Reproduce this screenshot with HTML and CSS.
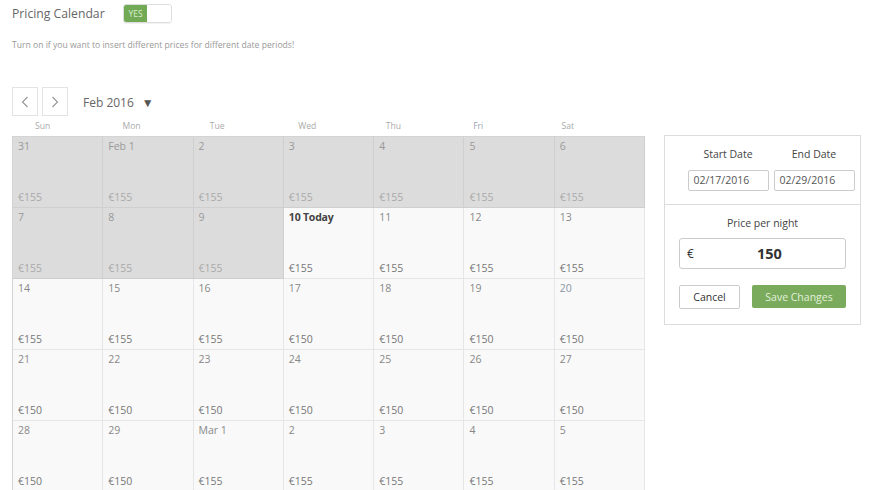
FILE: index.html
```html
<!DOCTYPE html>
<html>
<head>
<meta charset="utf-8">
<link rel="stylesheet" href="styles.css">
</head>
<body>
<div class="header">
  <span class="title">Pricing Calendar</span>
  <span class="toggle"><span class="toggle-on">YES</span><span class="toggle-off"></span></span>
</div>
<p class="hint">Turn on if you want to insert different prices for different date periods!</p>

<div class="main">
  <div class="calendar">
    <div class="nav">
      <button class="nav-btn"><svg width="8" height="12" viewBox="0 0 8 12"><path d="M6.5 1 L1.5 6 L6.5 11" fill="none" stroke="#999" stroke-width="1.2"/></svg></button>
      <button class="nav-btn"><svg width="8" height="12" viewBox="0 0 8 12"><path d="M1.5 1 L6.5 6 L1.5 11" fill="none" stroke="#999" stroke-width="1.2"/></svg></button>
      <span class="month">Feb 2016</span>
      <span class="caret">▼</span>
    </div>
    <div class="weekdays">
      <span>Sun</span><span>Mon</span><span>Tue</span><span>Wed</span><span>Thu</span><span>Fri</span><span>Sat</span>
    </div>
    <div class="grid">
      <div class="cell past"><span class="d">31</span><span class="p">€155</span></div>
      <div class="cell past"><span class="d">Feb 1</span><span class="p">€155</span></div>
      <div class="cell past"><span class="d">2</span><span class="p">€155</span></div>
      <div class="cell past"><span class="d">3</span><span class="p">€155</span></div>
      <div class="cell past"><span class="d">4</span><span class="p">€155</span></div>
      <div class="cell past"><span class="d">5</span><span class="p">€155</span></div>
      <div class="cell past"><span class="d">6</span><span class="p">€155</span></div>

      <div class="cell past"><span class="d">7</span><span class="p">€155</span></div>
      <div class="cell past"><span class="d">8</span><span class="p">€155</span></div>
      <div class="cell past"><span class="d">9</span><span class="p">€155</span></div>
      <div class="cell"><span class="d today">10 Today</span><span class="p">€155</span></div>
      <div class="cell"><span class="d">11</span><span class="p">€155</span></div>
      <div class="cell"><span class="d">12</span><span class="p">€155</span></div>
      <div class="cell"><span class="d">13</span><span class="p">€155</span></div>

      <div class="cell"><span class="d">14</span><span class="p">€155</span></div>
      <div class="cell"><span class="d">15</span><span class="p">€155</span></div>
      <div class="cell"><span class="d">16</span><span class="p">€155</span></div>
      <div class="cell"><span class="d">17</span><span class="p">€150</span></div>
      <div class="cell"><span class="d">18</span><span class="p">€150</span></div>
      <div class="cell"><span class="d">19</span><span class="p">€150</span></div>
      <div class="cell"><span class="d sat">20</span><span class="p">€150</span></div>

      <div class="cell"><span class="d">21</span><span class="p">€150</span></div>
      <div class="cell"><span class="d">22</span><span class="p">€150</span></div>
      <div class="cell"><span class="d">23</span><span class="p">€150</span></div>
      <div class="cell"><span class="d">24</span><span class="p">€150</span></div>
      <div class="cell"><span class="d">25</span><span class="p">€150</span></div>
      <div class="cell"><span class="d">26</span><span class="p">€150</span></div>
      <div class="cell"><span class="d">27</span><span class="p">€150</span></div>

      <div class="cell"><span class="d">28</span><span class="p">€150</span></div>
      <div class="cell"><span class="d">29</span><span class="p">€150</span></div>
      <div class="cell"><span class="d">Mar 1</span><span class="p">€155</span></div>
      <div class="cell"><span class="d">2</span><span class="p">€155</span></div>
      <div class="cell"><span class="d">3</span><span class="p">€155</span></div>
      <div class="cell"><span class="d">4</span><span class="p">€155</span></div>
      <div class="cell"><span class="d">5</span><span class="p">€155</span></div>
    </div>
  </div>

  <div class="panel">
    <div class="dates">
      <div class="field">
        <span class="label">Start Date</span>
        <span class="date-input">02/17/2016</span>
      </div>
      <div class="field">
        <span class="label">End Date</span>
        <span class="date-input">02/29/2016</span>
      </div>
    </div>
    <div class="price-section">
      <span class="label">Price per night</span>
      <div class="price-input"><span class="cur">€</span><span class="amount">150</span></div>
      <div class="actions">
        <button class="btn-cancel">Cancel</button>
        <button class="btn-save">Save Changes</button>
      </div>
    </div>
  </div>
</div>
</body>
</html>
```

FILE: styles.css
```css
* { box-sizing: border-box; }
body {
  margin: 0;
  padding: 0 0 0 12px;
  font-family: "Open Sans", "Liberation Sans", sans-serif;
  background: #fff;
  color: #777;
  width: 870px;
  height: 490px;
  overflow: hidden;
}
.header {
  display: flex;
  align-items: center;
  height: 28px;
  padding-bottom: 1px;
}
.title {
  font-size: 12.2px;
  color: #666;
  width: 111px;
}
.toggle {
  display: flex;
  width: 49px;
  height: 19px;
  border: 1px solid #ddd;
  border-radius: 3px;
  overflow: hidden;
  box-shadow: 0 1px 1px rgba(0,0,0,0.06);
}
.toggle-on {
  width: 23px;
  background: #72a954;
  color: #d9ecd0;
  font-size: 8.5px;
  display: flex;
  align-items: center;
  justify-content: center;
}
.toggle-off { flex: 1; background: #fff; }
.hint {
  margin: 11px 0 0;
  font-size: 8.6px;
  color: #999;
  line-height: 12px;
}
.main {
  display: flex;
  align-items: flex-start;
  margin-top: 36px;
}
.calendar { width: 633px; flex-shrink: 0; }
.nav {
  display: flex;
  align-items: center;
  height: 29px;
}
.nav-btn {
  width: 26px;
  height: 29px;
  border: 1px solid #e3e3e3;
  background: #fff;
  padding: 0;
  margin: 0 4px 0 0;
  display: flex;
  align-items: center;
  justify-content: center;
}
.month {
  margin-left: 11px;
  font-size: 12px;
  color: #666;
  padding-top: 2px;
}
.caret {
  margin-left: 8px;
  font-size: 12px;
  color: #555;
  padding-top: 1px;
}
.weekdays {
  display: grid;
  grid-template-columns: repeat(7, 1fr);
  height: 20px;
  align-items: center;
}
.weekdays span {
  font-size: 8.6px;
  color: #aaa;
}
.weekdays span:nth-child(1) { padding-left: 23px; }
.weekdays span:nth-child(2) { padding-left: 20px; }
.weekdays span:nth-child(3) { padding-left: 17px; }
.weekdays span:nth-child(4) { padding-left: 15px; }
.weekdays span:nth-child(5) { padding-left: 12px; }
.weekdays span:nth-child(6) { padding-left: 9px; color: #9aa4b0; }
.weekdays span:nth-child(7) { padding-left: 7px; }
.grid {
  display: grid;
  grid-template-columns: repeat(7, 1fr);
  grid-auto-rows: 71px;
  border-left: 1px solid #d4d4d4;
  border-top: 1px solid #d4d4d4;
}
.cell {
  display: flex;
  flex-direction: column;
  justify-content: space-between;
  padding: 2px 5px 2px 5px;
  background: #f9f9f9;
  border-right: 1px solid #e6e6e6;
  border-bottom: 1px solid #e6e6e6;
  font-size: 10.5px;
  line-height: 15px;
}
.cell .d { color: #888; }
.cell .d.sat { color: #8a96a6; }
.cell .p { color: #777; }
.cell.past {
  background: #dcdcdc;
  border-right-color: #cfcfcf;
  border-bottom-color: #cfcfcf;
}
.cell.past .d { color: #999; }
.cell.past .p { color: #aaa; }
.cell .today {
  color: #444;
  font-weight: bold;
  letter-spacing: -0.2px;
}
.panel {
  margin-left: 19px;
  margin-top: 48px;
  width: 197px;
  flex-shrink: 0;
  border: 1px solid #dcdcdc;
  background: #fff;
}
.dates {
  display: flex;
  justify-content: center;
  gap: 5px;
  padding: 10px 5px 13px 22px;
  border-bottom: 1px solid #dcdcdc;
}
.field {
  display: flex;
  flex-direction: column;
  align-items: center;
}
.label {
  font-size: 10.5px;
  color: #444;
  line-height: 16px;
}
.date-input {
  margin-top: 8px;
  width: 81px;
  height: 21px;
  border: 1px solid #ccc;
  border-radius: 2px;
  font-size: 10.5px;
  color: #555;
  padding-left: 5px;
  line-height: 19px;
}
.price-section {
  display: flex;
  flex-direction: column;
  align-items: center;
  padding: 10px 14px 15px 14px;
}
.price-input {
  margin-top: 7px;
  width: 167px;
  height: 31px;
  border: 1px solid #ccc;
  border-radius: 3px;
  display: flex;
  align-items: center;
  padding-left: 7px;
  color: #333;
}
.cur { font-size: 12px; }
.amount {
  font-size: 14.5px;
  font-weight: bold;
  margin-left: 63px;
}
.actions {
  margin-top: 16px;
  display: flex;
  justify-content: space-between;
  width: 167px;
}
.btn-cancel {
  width: 61px;
  height: 24px;
  border: 1px solid #ccc;
  border-radius: 2px;
  background: #fff;
  color: #333;
  font-family: inherit;
  font-size: 10.5px;
  padding: 0;
}
.btn-save {
  width: 94px;
  height: 23px;
  border: none;
  border-radius: 2px;
  background: #7aab5d;
  color: #e2f0da;
  font-family: inherit;
  font-size: 10.5px;
  padding: 0;
}
```
